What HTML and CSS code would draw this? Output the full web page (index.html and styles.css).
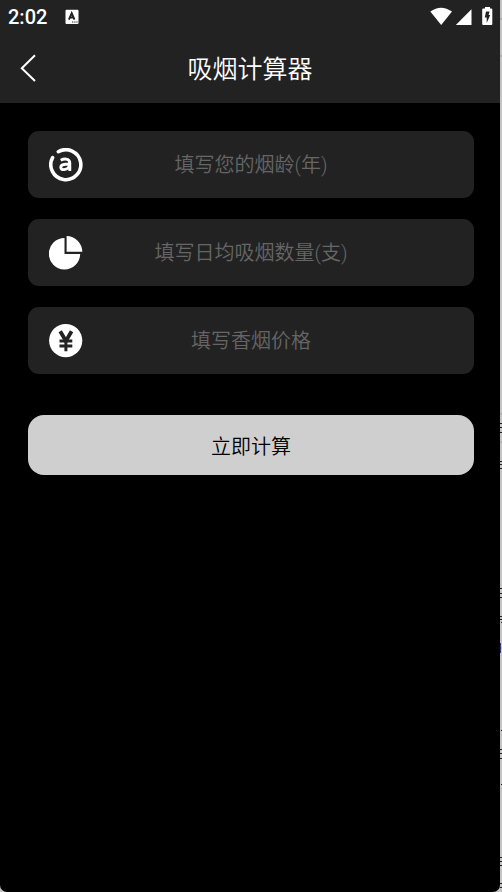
FILE: index.html
```html
<!DOCTYPE html>
<html lang="zh-CN">
<head>
<meta charset="utf-8">
<meta name="viewport" content="width=device-width, initial-scale=1">
<title>吸烟计算器</title>
<link rel="stylesheet" href="styles.css">
</head>
<body>
<div class="screen">
  <header class="top">
    <div class="status">
      <time class="clock">2:02</time>
      <svg class="app-badge" width="14" height="16" viewBox="0 0 14 16" aria-hidden="true">
        <rect x="0.5" y="0.7" width="13" height="14.3" rx="1" fill="#fff"/>
        <path d="M3.9 10.7 6.7 4.2 9.5 10.7M5 8.5h3.6" fill="none" stroke="#222" stroke-width="1.9"/>
        <path d="M7 13h1.3M9.2 13h1.3M11.3 13h1.3" stroke="#222" stroke-width="1.2"/>
      </svg>
      <svg class="signals" width="64" height="20" viewBox="0 0 64 20" aria-hidden="true">
        <path d="M0.3 5.5Q11 -2.2 22 5.5L11.2 19Z" fill="#fff"/>
        <path d="M41.5 3.3V19H25.8Z" fill="#fff"/>
        <path d="M55 1h5v1.5h1.3q1 0 1 1v14.5q0 1-1 1h-8.100q-1 0-1-1V3.500q0-1 1-1H55Z" fill="#fff"/>
        <path d="M56 5.500h3.500L58.600 9H60.200L56.700 17V11.500H54.800Z" fill="#222"/>
      </svg>
    </div>
    <nav class="bar">
      <button class="back" type="button" aria-label="返回">
        <svg width="18" height="30" viewBox="0 0 18 30" aria-hidden="true">
          <path d="M15 3.200 1.800 16.200 15 29" fill="none" stroke="#fff" stroke-width="2"/>
        </svg>
      </button>
      <h1 class="title">吸烟计算器</h1>
    </nav>
  </header>
  <main class="content">
    <form class="form">
      <label class="field">
        <svg viewBox="0 0 34 34" aria-hidden="true">
          <path d="M9.300 3.700A15 15 0 1 1 3.600 9.600" fill="none" stroke="#fff" stroke-width="3.600" stroke-linecap="round"/>
          <path d="M11.700 12.200Q14.500 10.800 17.200 11.100Q20.800 11.500 20.800 15.200V23M20.400 16.200H16.500Q11.800 16.400 11.800 19.300Q12 21.700 15 21.600Q19 21.200 20.500 18" fill="none" stroke="#fff" stroke-width="2.900"/>
        </svg>
        <input type="text" inputmode="numeric" placeholder="填写您的烟龄(年)" aria-label="烟龄(年)">
      </label>
      <label class="field">
        <svg viewBox="0 0 34 34" aria-hidden="true">
          <path d="M15.500 2V18H31.200A15.700 15.700 0 1 1 15.500 2Z" fill="#fff"/>
          <path d="M17.600 0A16 16 0 0 1 33.300 15.800H17.600Z" fill="#fff"/>
        </svg>
        <input type="text" inputmode="numeric" placeholder="填写日均吸烟数量(支)" aria-label="日均吸烟数量(支)">
      </label>
      <label class="field">
        <svg viewBox="0 0 34 34" aria-hidden="true">
          <circle cx="16.700" cy="16.600" r="16.600" fill="#fff"/>
          <path d="M11.200 7.300 16.900 17 22.600 7.300" fill="none" stroke="#222" stroke-width="3.800"/>
          <path d="M16.900 16V27.300M10.500 17H23.300M10.500 22H23.300" fill="none" stroke="#222" stroke-width="3"/>
        </svg>
        <input type="text" inputmode="decimal" placeholder="填写香烟价格" aria-label="香烟价格">
      </label>
      <button class="submit" type="button">立即计算</button>
    </form>
  </main>
</div>
<svg class="edge" width="2" height="892" viewBox="0 0 2 892" aria-hidden="true">
  <path d="M0 19h2M0 56h2M0 414h2M0 442h2" stroke="#999"/>
  <path d="M0 423.500h2M0 427.500h2M0 432.500h2M0 461.500h2M0 464.500h2M0 468.500h2M0 588.500h2M0 593.500h2M0 597.500h2M0 616.500h2M0 619.500h2M1 622.500h1M1 730.500h1M0 749.500h2M0 753.500h2M0 758.500h2M1 784.500h1M0 857.500h2M0 861.500h2M0 865.500h2M0 883.500h2M0 887.500h2" stroke="#222"/>
  <path d="M0 643h1v10h-1z" fill="#31406e"/>
</svg>
</body>
</html>
```

FILE: styles.css
```css
* {
  box-sizing: border-box;
}

body {
  display: flex;
  min-height: 100vh;
  margin: 0;
  background: #c4c4c4;
  color: #fff;
  font-family: "Noto Sans CJK SC", sans-serif;
  font-weight: 350;
}

.screen {
  flex: 1;
  min-width: 0;
  background: #000;
  border-radius: 0 0 7px 7px;
}

.edge {
  flex: none;
}

.top {
  padding-bottom: 3px;
  background: #222;
}

.status {
  display: flex;
  align-items: center;
  height: 34px;
  padding: 0 6px 0 8px;
}

.clock {
  font: 500 20px/34px Roboto, sans-serif;
}

.app-badge {
  margin-left: 18px;
}

.signals {
  margin-left: auto;
  margin-bottom: 2px;
}

.bar {
  display: grid;
  grid-template-columns: 56px 1fr 56px;
  align-items: center;
  height: 66px;
}

.back {
  display: flex;
  padding: 0 0 0 20px;
  border: 0;
  background: none;
}

.title {
  margin: 0;
  font-size: 25px;
  font-weight: 350;
  line-height: 36px;
  text-align: center;
}

.content {
  padding: 28px 26px 28px 28px;
}

.form {
  display: flex;
  flex-direction: column;
  gap: 21px;
}

.field {
  display: grid;
  grid-template-columns: 34px 1fr 34px;
  align-items: center;
  height: 67px;
  padding: 0 21px;
  border-radius: 11px;
  background: #222;
}

.field input {
  width: 100%;
  min-width: 0;
  height: 40px;
  padding: 0;
  border: 0;
  outline: 0;
  background: none;
  color: #fff;
  font-family: Roboto, "Noto Sans CJK SC", sans-serif;
  font-size: 20px;
  font-weight: 350;
  text-align: center;
}

.field input::placeholder {
  color: #666;
  opacity: 1;
}

.submit {
  height: 60px;
  margin-top: 20px;
  border: 0;
  border-radius: 16px;
  background: #cfcfcf;
  color: #000;
  font: inherit;
  font-size: 20px;
}
```
